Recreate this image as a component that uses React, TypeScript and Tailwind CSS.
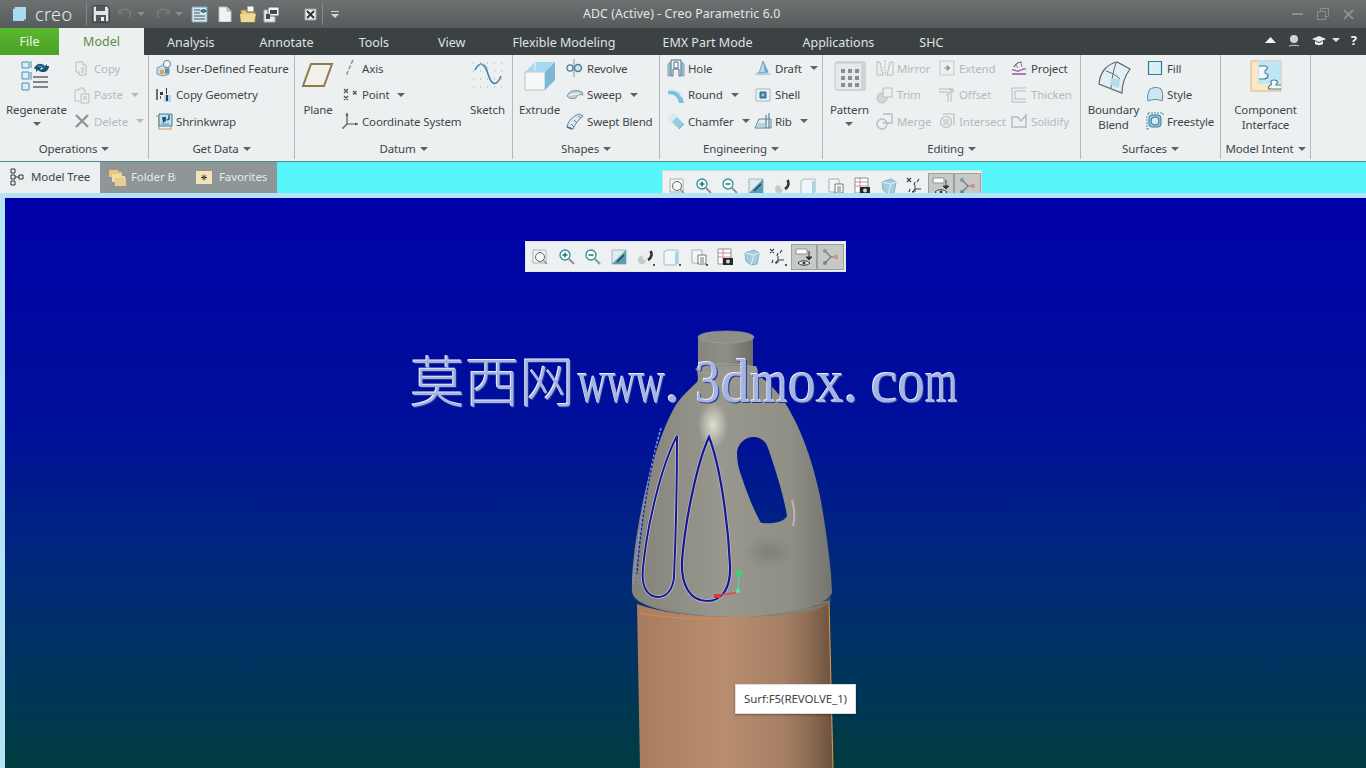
import type { ReactNode } from "react";

const FONT = "font-['Noto_Sans','Open_Sans',sans-serif]";

function Svg({ size = 18, h, children }: { size?: number; h?: number; children: ReactNode }) {
  return (
    <svg width={size} height={h ?? size} viewBox={`0 0 ${size} ${h ?? size}`} fill="none" className="block shrink-0">
      {children}
    </svg>
  );
}

function Caret({ color = "#5a6264" }: { color?: string }) {
  return (
    <svg width="8" height="4" viewBox="0 0 8 4" className="shrink-0">
      <path d="M0 0h8L4 4z" fill={color} />
    </svg>
  );
}

/* ---- ribbon icons ---- */
const icons: Record<string, ReactNode> = {
  copy: (
    <Svg>
      <path d="M3 3h7v3h3v10H6v-3H3z" fill="#eef0f0" stroke="#b5bcbe" />
      <path d="M8 9h3M8 11h3M8 13h3" stroke="#b5bcbe" />
    </Svg>
  ),
  paste: (
    <Svg>
      <path d="M2 4h4l1-2h3l1 2h1v3" stroke="#b5bcbe" />
      <path d="M2 4v11h5" stroke="#b5bcbe" />
      <path d="M8 8h8v9H8z" fill="#eef0f0" stroke="#b5bcbe" />
      <path d="M10 11h4M10 13h4" stroke="#b5bcbe" />
    </Svg>
  ),
  del: (
    <Svg>
      <path d="M3 3l12 12M15 3L3 15" stroke="#8e9698" strokeWidth="2.4" />
    </Svg>
  ),
  udf: (
    <Svg>
      <path d="M2 9l6-3 6 3v6l-6 2-6-2z" fill="#c9dbe6" stroke="#7f97a6" />
      <circle cx="12" cy="5" r="3.6" fill="#f4f6f6" stroke="#4f86a8" />
      <path d="M5 11h4v4H5z" fill="#d6a85a" />
      <path d="M10 9l4 1v4l-4 1z" fill="#6c8ea3" />
    </Svg>
  ),
  copygeo: (
    <Svg>
      <path d="M2 3v11" stroke="#333a3d" strokeWidth="1.4" />
      <path d="M5 6h3v3H5z" fill="#333a3d" />
      <path d="M5 10h1v3H5z" fill="#5a6264" />
      <path d="M11 2h1v6h-1z" fill="#333a3d" />
      <path d="M9 9h7v7H9z" fill="#a6d8ef" />
      <path d="M11 9h2v6h-2z" fill="#333a3d" />
    </Svg>
  ),
  shrink: (
    <Svg>
      <path d="M1 4h3v13h12v-2" stroke="#c9a24f" strokeWidth="1.2" />
      <path d="M4 2h13v12H4z" fill="#bfe0f0" stroke="#3f7896" />
      <path d="M7 5h4v4l-3 2z" fill="#22566f" />
      <path d="M14 3v4l-2 1" stroke="#22566f" strokeWidth="1.4" />
      <path d="M6 12h8" stroke="#4f8fb0" />
    </Svg>
  ),
  axis: (
    <Svg>
      <path d="M12 1L5 17" stroke="#7b8284" strokeWidth="1.2" strokeDasharray="4 2" />
      <path d="M11 2L6 14" stroke="#b79a63" strokeWidth="0.8" strokeDasharray="2 4" />
    </Svg>
  ),
  point: (
    <Svg>
      <path d="M3 3l4 4M7 3L3 7M12 5l3.500 3.500M15.500 5L12 8.500M3 10l4 4M7 10l-4 4" stroke="#4f575a" strokeWidth="1.3" />
    </Svg>
  ),
  csys: (
    <Svg>
      <path d="M6 1v11M6 12h11M6 12l-4 4" stroke="#4f575a" strokeWidth="1.2" />
      <path d="M6 1L4.500 4h3zM17 12l-3-1.500v3z" fill="#4f575a" />
      <circle cx="2" cy="16" r="1" fill="#a8763a" />
    </Svg>
  ),
  revolve: (
    <Svg>
      <path d="M8 0v18" stroke="#8b9599" />
      <ellipse cx="4" cy="9" rx="3" ry="3.200" stroke="#4c7f9a" strokeWidth="1.300" />
      <ellipse cx="12" cy="9" rx="3.500" ry="3.500" stroke="#4c7f9a" strokeWidth="1.500" fill="#cfe3ec" />
    </Svg>
  ),
  sweep: (
    <Svg>
      <path d="M1 10c2-5 8-7 15-4l1 3c-4-1-6 0-7 3-3 1-7 1-9-2z" fill="#b9cfd9" stroke="#7b949f" />
      <path d="M3 10c3-2 6-3 10-2" stroke="#eef5f8" strokeWidth="1.500" />
    </Svg>
  ),
  swept: (
    <Svg>
      <path d="M1 15c1-6 6-11 12-13l4 2c-4 3-8 8-10 13z" fill="#dbe8ee" stroke="#5f8499" />
      <path d="M5 12l3 3M8 8l3 3M12 4l3 2" stroke="#5f8499" />
      <path d="M1 15l5 2" stroke="#4a6d80" strokeWidth="1.500" />
    </Svg>
  ),
  hole: (
    <Svg>
      <path d="M3 3l-2 2v12h2zM15 3l2 2v12h-2z" fill="#a7cfe2" stroke="#7fa6b9" />
      <path d="M4 1h10v16h-2v-7H6v7H4z" fill="#edf4f7" stroke="#4d6f80" />
      <path d="M7 3h4v6H7z" fill="#fff" stroke="#4d6f80" />
    </Svg>
  ),
  round: (
    <Svg>
      <path d="M1 4c8-2 14 1 16 13h-5C11 11 7 8 1 8z" fill="#7fc0dd" />
      <path d="M1 4c7-1 12 1 14 7" stroke="#d6ebf4" strokeWidth="2" />
    </Svg>
  ),
  chamfer: (
    <Svg>
      <path d="M1 6l5-5 11 11-5 5z" fill="#93cbe3" />
      <path d="M1 6l5-5 4 4-5 5z" fill="#d7ecf5" />
      <path d="M12 17l5-5" stroke="#6ea9c2" />
    </Svg>
  ),
  draft: (
    <Svg>
      <path d="M1 16h16l-3-3H3z" fill="#a6d5ea" />
      <path d="M5 14L9 2l5 11z" fill="#bcd9e6" stroke="#7fa6b9" />
      <path d="M9 2l5 11h-3z" fill="#6aa9c6" />
    </Svg>
  ),
  shell: (
    <Svg>
      <path d="M2 3h14v12H2z" fill="#e8f2f6" stroke="#9dbccb" />
      <path d="M6 6h6v6H6z" fill="#4b8fb2" stroke="#2d6a88" />
      <path d="M8 8h2v2H8z" fill="#9fd0e6" />
    </Svg>
  ),
  rib: (
    <Svg>
      <path d="M1 16l4-9h12v9z" fill="#e4eff4" stroke="#5f8499" />
      <path d="M15 1v15M12 3v13" stroke="#5f8499" strokeWidth="1.200" />
      <path d="M4 12h8M3 14h9" stroke="#86b6cd" />
    </Svg>
  ),
  mirror: (
    <Svg>
      <path d="M1 3h3c1 5 2 9 3 13H1zM17 3h-3c-1 5-2 9-3 13h6z" stroke="#b5bcbe" />
      <path d="M9 1v16" stroke="#b5bcbe" strokeDasharray="2 1" />
    </Svg>
  ),
  trim: (
    <Svg>
      <circle cx="6" cy="12" r="5" fill="#d3d8d9" stroke="#b5bcbe" />
      <path d="M7 2h9v9H7z" fill="#eef0f0" stroke="#b5bcbe" />
    </Svg>
  ),
  merge: (
    <Svg>
      <circle cx="6" cy="12" r="5" stroke="#b5bcbe" strokeWidth="1.300" />
      <path d="M7 2h9v9H7" stroke="#b5bcbe" strokeWidth="1.300" />
    </Svg>
  ),
  extend: (
    <Svg>
      <path d="M2 2h14v14H2z" stroke="#c2c8ca" />
      <path d="M6 9h5M9 6.500L12 9l-3 2.500z" fill="#8e9698" stroke="#8e9698" />
    </Svg>
  ),
  offset: (
    <Svg>
      <path d="M1 3h12v13M1 6h9v10" stroke="#b5bcbe" />
      <path d="M8 10l7-7M11 3h4v4" stroke="#b5bcbe" />
    </Svg>
  ),
  intersect: (
    <Svg>
      <path d="M5 2h11v11" stroke="#b5bcbe" strokeWidth="1.200" />
      <circle cx="8" cy="10" r="5.500" stroke="#b5bcbe" strokeWidth="1.200" />
      <path d="M5 7h6v6H5z" fill="#d3d8d9" />
    </Svg>
  ),
  project: (
    <Svg>
      <path d="M2 15h14" stroke="#8a5a94" strokeWidth="1.500" />
      <path d="M2 11c3-1 4 2 7 1s4-3 7-2" stroke="#8a5a94" strokeWidth="1.300" />
      <path d="M4 8c2-4 5-5 8-5" stroke="#5c6467" strokeWidth="1.200" />
      <path d="M6 6l2 3M11 4l1 4" stroke="#b0659c" />
    </Svg>
  ),
  thicken: (
    <Svg>
      <path d="M2 2h14M2 2v14h14M5 5h11M5 5v8h11" stroke="#b5bcbe" />
    </Svg>
  ),
  solidify: (
    <Svg>
      <path d="M2 5h6l3 4 5-6v12H2z" stroke="#b5bcbe" strokeWidth="1.500" />
    </Svg>
  ),
  fill: (
    <Svg>
      <path d="M2.500 2.500h13v13h-13z" fill="#d9eef7" stroke="#2f7c9f" strokeWidth="1.200" />
    </Svg>
  ),
  style: (
    <Svg>
      <path d="M2 15c-1-5 0-9 2-12 4-2 8-2 11 0 2 3 2 8 1 12-4-2-9-2-14 0z" fill="#cfe6f1" stroke="#4e8aa8" />
    </Svg>
  ),
  freestyle: (
    <Svg>
      <path d="M2 1h15M2 1v3M17 1v3M1 17h3M1 4v13" stroke="#5f8499" strokeDasharray="2 1" />
      <rect x="3" y="3" width="12" height="12" rx="3" fill="#8dc6e0" stroke="#3c7b9a" />
      <circle cx="9" cy="9" r="4" fill="#d6ecf6" stroke="#3c7b9a" />
    </Svg>
  ),
};

function RegenIcon() {
  return (
    <Svg size={36} h={32}>
      <path d="M3 2h7v6H3z" fill="#d9eef7" stroke="#4b8fb2" />
      <path d="M3 12h7v7H3z" fill="#d9eef7" stroke="#4b8fb2" />
      <path d="M3 23h7v7H3z" fill="#d9eef7" stroke="#4b8fb2" />
      <path d="M12 1v7M12 12v8" stroke="#4b8fb2" />
      <path d="M14 17h15M14 22h15M14 27h15" stroke="#7f878a" strokeWidth="1.800" />
      <path d="M15 9c1-5 7-7 11-3l2-2v6h-6l2-2c-2-2-6-2-7 1z" fill="#1f5f7f" />
      <path d="M30 6c0 6-7 8-11 4l-2 2V7h6l-2 2c2 2 6 1 7-3z" fill="#17506d" />
    </Svg>
  );
}

function PlaneIcon() {
  return (
    <Svg size={32} h={30}>
      <path d="M9 4h21l-8 22H1z" fill="#f1f0ea" stroke="#8f7a4e" strokeWidth="2" />
    </Svg>
  );
}

function SketchIcon() {
  return (
    <Svg size={32} h={32}>
      <path d="M1 3h30M1 11h30M1 19h30M1 27h30" stroke="#9aa2a5" strokeDasharray="1 6" />
      <path d="M3 10c5-10 10-6 13 4s8 14 13 2" stroke="#3f7f9f" strokeWidth="1.500" />
      <path d="M5 8c4-6 8-5 11 1" stroke="#8bc0d8" strokeWidth="1" />
    </Svg>
  );
}

function ExtrudeIcon() {
  return (
    <Svg size={34} h={32}>
      <path d="M2 12h20v18H2z" fill="#f7f9f9" stroke="#b9c4c8" />
      <path d="M2 12L12 2h20L22 12z" fill="#a6d8ef" />
      <path d="M22 12L32 2v18L22 30z" fill="#7bb8d6" />
      <path d="M12 2v9" stroke="#eaf5fa" />
    </Svg>
  );
}

function PatternIcon() {
  return (
    <Svg size={34} h={34}>
      <path d="M3 1h28l2 2v28H5l-2-2z" fill="#d0d4d5" />
      <path d="M2 3h27v27H2z" fill="#e6e8e9" stroke="#c7cbcc" />
      {[8, 15, 22].map((x) =>
        [9, 16, 23].map((y) => <rect key={`${x}-${y}`} x={x} y={y} width="4" height="4" fill="#888f91" />),
      )}
    </Svg>
  );
}

function BoundaryIcon() {
  return (
    <Svg size={34} h={34}>
      <path d="M2 24C3 12 10 4 20 2l13 7c-5 7-8 15-8 24z" fill="#e3eff4" stroke="#5c6a70" strokeWidth="1.200" />
      <path d="M9 11c6 2 10 4 14 8M19 3c-3 8-4 16-5 25" stroke="#5c6a70" />
      <path d="M14 18l9 1-1 9-9-3z" fill="#b6dcec" />
    </Svg>
  );
}

function InterfaceIcon() {
  return (
    <Svg size={32} h={32}>
      <path d="M1 1h30v30H1z" fill="#fbe7c4" stroke="#d6b781" />
      <path d="M8 1h23v23H8z" fill="#bfe6f5" />
      <path d="M9 6h6c3 0 3 3 1 4s-1 4 1 4 1 5-3 5H9" stroke="#4d7d94" strokeWidth="1.200" fill="#f2f8fa" />
      <path d="M31 29H20c-3 0-1-4 1-4s-3-5 3-5 2 5 2 5h5" stroke="#4d7d94" strokeWidth="1.200" fill="#f2f8fa" />
    </Svg>
  );
}

/* ---- view toolbar icons ---- */
const viewIcons: ReactNode[] = [
  <Svg key="a">
    <path d="M2 2h13v13H2z" stroke="#aab2b4" fill="#f5f7f7" />
    <circle cx="9" cy="9" r="4.500" stroke="#5d6669" />
    <path d="M12 12l4 4" stroke="#8d9496" strokeWidth="1.500" />
  </Svg>,
  <Svg key="b">
    <circle cx="7" cy="7" r="5" fill="#fff" stroke="#2f8f95" strokeWidth="1.300" />
    <path d="M4.500 7h5M7 4.500v5" stroke="#1f6f7a" strokeWidth="1.500" />
    <path d="M11 11l5 5" stroke="#8d9496" strokeWidth="2" />
  </Svg>,
  <Svg key="c">
    <circle cx="7" cy="7" r="5" fill="#fff" stroke="#2f8f95" strokeWidth="1.300" />
    <path d="M4.500 7h5" stroke="#1f6f7a" strokeWidth="1.500" />
    <path d="M11 11l5 5" stroke="#8d9496" strokeWidth="2" />
  </Svg>,
  <Svg key="d">
    <path d="M2 2h14v14H2z" fill="#dcecf2" stroke="#aab2b4" />
    <path d="M2 16L16 2v14z" fill="#5e9eb5" />
    <path d="M7 14l7-7" stroke="#233c48" strokeWidth="1.300" />
  </Svg>,
  <Svg key="e">
    <circle cx="5" cy="12" r="4" fill="#c9cbcb" />
    <circle cx="10" cy="8" r="4.500" fill="#eceeee" />
    <path d="M13.500 3c2 3 1 7-2.500 9" stroke="#2c3336" strokeWidth="2.600" />
    <path d="M16 16h2v2h-2z" fill="#4f575a" />
  </Svg>,
  <Svg key="f">
    <path d="M1 4l3-2h11v13l-3 2H1z" fill="#eef7fb" stroke="#aab9bf" />
    <path d="M12 4h3v11l-3 2z" fill="#a6d5ea" />
    <path d="M16 16h2v2h-2z" fill="#4f575a" />
  </Svg>,
  <Svg key="g">
    <path d="M2 2h10v13H2z" fill="#f3f6f7" stroke="#aab2b4" />
    <path d="M8 7h8v9H8z" fill="#fff" stroke="#6f787b" />
    <path d="M10 10h4M10 12h4M10 14h4" stroke="#6f787b" />
    <path d="M16 16h2v2h-2z" fill="#4f575a" />
  </Svg>,
  <Svg key="h">
    <path d="M2 1h13v15H2z" fill="#fff" stroke="#8b9396" />
    <path d="M2 5h13M2 9h13M7 1v15" stroke="#b06565" strokeWidth="0.700" />
    <path d="M7 10h10v7H7z" fill="#24292b" />
    <circle cx="12" cy="13.500" r="2" fill="#d3d7d8" />
  </Svg>,
  <Svg key="i">
    <path d="M3 5l9-3 5 3-2 11-6 1-5-4z" fill="#a4cddd" stroke="#87adbd" />
    <path d="M3 5l9 2 5-2M12 7l-3 10" stroke="#e3f2f7" />
  </Svg>,
  <Svg key="j">
    <path d="M1 1l4 4M5 1L1 5M9 5l-1 3M13 2l-2 3M3 15l1-3M7 16l1-3" stroke="#3d4548" strokeWidth="1.200" />
    <path d="M9 8v7M9 12h6M9 12l-3 3" stroke="#3d4548" />
    <path d="M16 16h2v2h-2z" fill="#4f575a" />
  </Svg>,
  <Svg key="k">
    <path d="M1 1h11v5H1z" fill="#fff" stroke="#8b9396" />
    <path d="M14 3v6M11 9l3 3 3-3z" fill="#33393c" stroke="#33393c" />
    <path d="M3 15c3-3 9-3 12 0-3 3-9 3-12 0z" fill="#e6e9ea" stroke="#33393c" />
    <circle cx="9" cy="15" r="1.500" fill="#33393c" />
  </Svg>,
  <Svg key="l">
    <path d="M4 3l6 6M4 15l6-6h6" stroke="#6f787b" strokeWidth="1.200" />
    <circle cx="4" cy="3" r="2" fill="#7f9aa8" />
    <circle cx="4" cy="15" r="2" fill="#5c8ca3" />
    <circle cx="15" cy="9" r="2.200" fill="#c99a7e" />
  </Svg>,
];

function ViewToolbar({ className }: { className: string }) {
  return (
    <div className={`flex items-start bg-[#edf1f1] pl-[1px] pt-[2px] ${className}`}>
      {viewIcons.map((icon, i) => (
        <div
          key={i}
          className={`flex h-[26px] w-[26.400px] items-center justify-center ${
            i >= 10 ? "border border-[#9aa09c] bg-[#c6c9c6]" : ""
          }`}
        >
          {icon}
        </div>
      ))}
    </div>
  );
}

/* ---- ribbon ---- */
function Small({ icon, label, caret, off }: { icon: string; label: string; caret?: boolean; off?: boolean }) {
  return (
    <div className="flex h-[26.500px] items-center">
      <div className="flex w-[21px] shrink-0 items-center">{icons[icon]}</div>
      <span className={`whitespace-nowrap ${off ? "text-[#b4babc]" : "text-[#3e4648]"}`}>{label}</span>
      {caret && (
        <span className="ml-[8px]">
          <Caret color={off ? "#b4babc" : "#5a6264"} />
        </span>
      )}
    </div>
  );
}

function Col({ children, className = "" }: { children: ReactNode; className?: string }) {
  return <div className={`flex flex-col ${className}`}>{children}</div>;
}

function Large({
  icon,
  lines,
  caret,
  className,
}: {
  icon: ReactNode;
  lines: string[];
  caret?: boolean;
  className: string;
}) {
  return (
    <div className={`flex shrink-0 flex-col items-center ${className}`}>
      <div className="flex h-[39px] items-start justify-center pt-[5px]">{icon}</div>
      <div className="mt-[8px] flex flex-col items-center leading-[15px] text-[#3e4648]">
        {lines.map((l) => (
          <span key={l} className="whitespace-nowrap">
            {l}
          </span>
        ))}
        {caret && (
          <span className="mt-[5px]">
            <Caret />
          </span>
        )}
      </div>
    </div>
  );
}

function Group({ title, width, children }: { title: string; width: string; children: ReactNode }) {
  return (
    <div className={`flex h-[104px] shrink-0 flex-col border-r border-[#b3babb] ${width}`}>
      <div className="flex h-[86px] overflow-hidden">{children}</div>
      <div className="flex h-[16px] items-center justify-center gap-[4px] text-[#3e4648]">
        <span>{title}</span>
        <Caret />
      </div>
    </div>
  );
}

function Ribbon() {
  return (
    <div className="flex h-[106px] bg-[#edf0f1] text-[11.500px] tracking-[-0.15px]">
      <Group title="Operations" width="w-[149px]">
        <Large className="w-[73px]" icon={<RegenIcon />} lines={["Regenerate"]} caret />
        <Col>
          <Small icon="copy" label="Copy" off />
          <Small icon="paste" label="Paste" off caret />
          <Small icon="del" label="Delete" off caret />
        </Col>
      </Group>
      <Group title="Get Data" width="w-[146px]">
        <Col className="pl-[6px]">
          <Small icon="udf" label="User-Defined Feature" />
          <Small icon="copygeo" label="Copy Geometry" />
          <Small icon="shrink" label="Shrinkwrap" />
        </Col>
      </Group>
      <Group title="Datum" width="w-[218px]">
        <Large className="w-[46px]" icon={<PlaneIcon />} lines={["Plane"]} />
        <Col className="w-[122px]">
          <Small icon="axis" label="Axis" />
          <Small icon="point" label="Point" caret />
          <Small icon="csys" label="Coordinate System" />
        </Col>
        <Large className="w-[49px]" icon={<SketchIcon />} lines={["Sketch"]} />
      </Group>
      <Group title="Shapes" width="w-[147px]">
        <Large className="w-[53px]" icon={<ExtrudeIcon />} lines={["Extrude"]} />
        <Col>
          <Small icon="revolve" label="Revolve" />
          <Small icon="sweep" label="Sweep" caret />
          <Small icon="swept" label="Swept Blend" />
        </Col>
      </Group>
      <Group title="Engineering" width="w-[163px]">
        <Col className="w-[94px] pl-[7px]">
          <Small icon="hole" label="Hole" />
          <Small icon="round" label="Round" caret />
          <Small icon="chamfer" label="Chamfer" caret />
        </Col>
        <Col>
          <Small icon="draft" label="Draft" caret />
          <Small icon="shell" label="Shell" />
          <Small icon="rib" label="Rib" caret />
        </Col>
      </Group>
      <Group title="Editing" width="w-[258px]">
        <Large className="w-[53px]" icon={<PatternIcon />} lines={["Pattern"]} caret />
        <Col className="w-[62px]">
          <Small icon="mirror" label="Mirror" off />
          <Small icon="trim" label="Trim" off />
          <Small icon="merge" label="Merge" off />
        </Col>
        <Col className="w-[72px]">
          <Small icon="extend" label="Extend" off />
          <Small icon="offset" label="Offset" off />
          <Small icon="intersect" label="Intersect" off />
        </Col>
        <Col>
          <Small icon="project" label="Project" />
          <Small icon="thicken" label="Thicken" off />
          <Small icon="solidify" label="Solidify" off />
        </Col>
      </Group>
      <Group title="Surfaces" width="w-[140px]">
        <Large className="w-[65px]" icon={<BoundaryIcon />} lines={["Boundary", "Blend"]} />
        <Col>
          <Small icon="fill" label="Fill" />
          <Small icon="style" label="Style" />
          <Small icon="freestyle" label="Freestyle" />
        </Col>
      </Group>
      <Group title="Model Intent" width="w-[90px]">
        <Large className="w-[89px]" icon={<InterfaceIcon />} lines={["Component", "Interface"]} />
      </Group>
    </div>
  );
}

function TitleBar() {
  return (
    <div className="relative flex h-[28px] items-center bg-gradient-to-b from-[#6c7272] to-[#565c5c] pl-[13px]">
      <svg width="13" height="14" viewBox="0 0 13 14" className="shrink-0">
        <path d="M2 0h11v12l-2 2H0V2z" fill="#a9dcf0" />
        <path d="M0 2h2V0zM11 14v-2h2z" fill="#5c8ea3" />
      </svg>
      <span className="ml-[9px] w-[46px] text-[18px] font-light leading-none tracking-[0.4px] text-[#e6e9e9]">creo</span>
      <div className="ml-[5px] mr-[5px] h-[22px] w-px bg-[#858b8b]" />
      <div className="flex items-center">
        <Svg size={18}>
          <path d="M1 1h14l2 2v14H1z" fill="#dfe4e6" stroke="#23292b" />
          <path d="M4 1h9v5H4zM4 10h10v7H4z" fill="#50575a" />
          <path d="M9 12h3v4H9z" fill="#eef0f0" />
        </Svg>
        <span className="ml-[7px] flex items-center gap-[4px] opacity-40">
          <Svg size={16}>
            <path d="M2 6c3-4 8-4 11 0 1 2 0 4-1 6" stroke="#8a9090" strokeWidth="2" />
            <path d="M1 2v6h6z" fill="#8a9090" />
          </Svg>
          <Caret color="#c3c7c7" />
        </span>
        <span className="ml-[10px] flex items-center gap-[4px] opacity-40">
          <Svg size={16}>
            <path d="M14 6c-3-4-8-4-11 0-1 2 0 4 1 6" stroke="#8a9090" strokeWidth="2" />
            <path d="M15 2v6H9z" fill="#8a9090" />
          </Svg>
          <Caret color="#c3c7c7" />
        </span>
        <span className="ml-[8px]">
          <Svg size={17}>
            <path d="M1 1h15v15H1z" fill="#d8e7ec" stroke="#7fa4b3" />
            <path d="M3 4h6M3 7h6M3 10h11M3 13h11" stroke="#37505c" />
            <path d="M10 6c1-3 4-3 5 0M15 4c-1 3-4 3-5 0" stroke="#1f5f7f" strokeWidth="1.500" />
          </Svg>
        </span>
        <span className="ml-[9px]">
          <Svg size={16}>
            <path d="M2 1h8l4 4v11H2z" fill="#f1f3f3" stroke="#b9bfc0" />
            <path d="M10 1v4h4" fill="#c9ced0" stroke="#9ea5a7" />
          </Svg>
        </span>
        <span className="ml-[6px]">
          <Svg size={18}>
            <path d="M2 5h5l1 2h8v10H2z" fill="#e7c77c" stroke="#a08548" />
            <path d="M8 1h7v6H8z" fill="#fafafa" stroke="#676d6e" />
            <path d="M1 9h16l-2 8H2z" fill="#f0d993" />
          </Svg>
        </span>
        <span className="ml-[6px]">
          <Svg size={17}>
            <path d="M1 4h11v12H1z" fill="#e7ecee" stroke="#a9afb1" />
            <path d="M5 1h11v9H5z" fill="#f5f7f7" stroke="#5d6467" />
            <path d="M7 4h7v4H7zM3 8h4v5H3z" fill="#3e4a4f" />
          </Svg>
        </span>
        <span className="ml-[24px]">
          <Svg size={13}>
            <path d="M1 1h11v11H1z" fill="#e8ebeb" stroke="#9aa0a1" />
            <path d="M3 3l7 7M10 3l-7 7" stroke="#2a3032" strokeWidth="1.800" />
          </Svg>
        </span>
        <div className="ml-[5px] h-[22px] w-px bg-[#858b8b]" />
        <span className="ml-[8px] flex flex-col items-center gap-[2px]">
          <span className="h-px w-[8px] bg-[#d3d6d6]" />
          <Caret color="#d3d6d6" />
        </span>
      </div>
      <span className="absolute left-[583px] text-[12.300px] tracking-[0.1px] text-[#e3e6e6]">ADC (Active) - Creo Parametric 6.0</span>
      <div className="ml-auto flex items-center gap-[14px] pr-[12px] text-[#8a9090]">
        <span className="h-[2px] w-[11px] bg-[#8a9090]" />
        <Svg size={12}>
          <path d="M0.500 3.500h8v8h-8zM3.500 3V0.500h8v8H9" stroke="#8a9090" />
        </Svg>
        <Svg size={11}>
          <path d="M1 1l9 9M10 1l-9 9" stroke="#8a9090" strokeWidth="1.800" />
        </Svg>
      </div>
    </div>
  );
}

function TabBar() {
  const tabs = [
    ["Analysis", "ml-[23px]"],
    ["Annotate", "ml-[45px]"],
    ["Tools", "ml-[45px]"],
    ["View", "ml-[49px]"],
    ["Flexible Modeling", "ml-[47px]"],
    ["EMX Part Mode", "ml-[47px]"],
    ["Applications", "ml-[50px]"],
    ["SHC", "ml-[45px]"],
  ];
  return (
    <div className="flex h-[27px] bg-[#3c4244] text-[12.500px] text-[#dfe3e3]">
      <div className="flex w-[59px] items-center justify-center bg-gradient-to-b from-[#5cb82f] to-[#4aa028] pt-[2px] text-[#eef7e8]">File</div>
      <div className="flex w-[85px] items-center justify-center bg-[#edf0f1] pt-[2px] text-[#5e8a3c]">Model</div>
      {tabs.map(([t, m]) => (
        <div key={t} className={`flex items-center whitespace-nowrap pt-[3px] ${m}`}>
          {t}
        </div>
      ))}
      <div className="ml-auto flex items-center gap-[11px] pb-[3px] pr-[9px]">
        <svg width="11" height="6" viewBox="0 0 11 6">
          <path d="M0 6l5.500-6L11 6z" fill="#f2f4f4" />
        </svg>
        <Svg size={14}>
          <circle cx="7" cy="6" r="4" fill="#cfd3d3" />
          <path d="M2 13c3-1 7-1 10 0" stroke="#cfd3d3" />
        </Svg>
        <span className="flex items-center gap-[6px]">
          <Svg size={14}>
            <path d="M0 6l7-3 7 3-7 3z" fill="#e8ebeb" />
            <path d="M3 8v3c2 1.500 6 1.500 8 0V8L7 10z" fill="#e8ebeb" />
          </Svg>
          <Caret color="#e8ebeb" />
        </span>
        <span className="text-[13px] font-bold leading-none text-[#f2f4f4]">?</span>
      </div>
    </div>
  );
}

function Dock() {
  return (
    <div className="flex h-[37px] flex-col bg-[#b5e3f6]">
      <div className="flex h-[32px] overflow-hidden border-t border-[#4d8a8c] bg-[#58f4fb] text-[11.500px] tracking-[-0.1px]">
        <div className="flex w-[100px] items-center bg-[#eceff0] pb-[1px] pl-[10px] text-[#3e4648]">
          <Svg size={14} h={18}>
            <path d="M1 1h4v4H1zM1 7h4v4H1zM1 13h4v4H1zM9 7h4v4H9zM5 9h4" stroke="#2f3638" />
          </Svg>
          <span className="ml-[7px] whitespace-nowrap">Model Tree</span>
        </div>
        <div className="flex w-[177px] items-center bg-[#8e9697] pb-[1px] pl-[8px] text-[#e8ebeb]">
          <Svg size={19}>
            <path d="M1 2h9l1 2h3v5H1z" fill="#e7c77c" />
            <path d="M4 6h9l1 2h3v6H4z" fill="#f1dca4" />
            <path d="M7 10h11v8H7z" fill="#e9cf8f" />
          </Svg>
          <span className="ml-[4px] w-[45px] overflow-hidden whitespace-nowrap">Folder Browser</span>
          <span className="ml-[20px]">
            <Svg size={16}>
              <path d="M0 2h16v13H0z" fill="#f4e5b6" />
              <path d="M5 8.500h6M8 5.500v6M6 6.500l4 4M10 6.500l-4 4" stroke="#3e4648" />
            </Svg>
          </span>
          <span className="ml-[7px]">Favorites</span>
        </div>
        <ViewToolbar className="ml-[385px] mt-[8px] h-[32px] w-[320px] border border-[#d6dcdc]" />
      </div>
    </div>
  );
}

/* glyph box and squeeze for the wide latin part of the watermark */
const wm: [string, string][] = [
  ["w", "w-[29px] scale-x-[0.66]"],
  ["w", "w-[29px] scale-x-[0.66]"],
  ["w", "w-[29px] scale-x-[0.66]"],
  [".", "w-[15px]"],
  ["\u00a0", "w-[15px]"],
  ["3", "w-[26px] scale-x-[0.8]"],
  ["d", "w-[29px] scale-x-[0.93]"],
  ["m", "w-[38px] scale-x-[0.78]"],
  ["o", "w-[28px] scale-x-[0.9]"],
  ["x", "w-[28px] scale-x-[0.9]"],
  [".", "w-[14px]"],
  ["\u00a0", "w-[13px]"],
  ["c", "w-[27px]"],
  ["o", "w-[27px] scale-x-[0.88]"],
  ["m", "w-[33px] scale-x-[0.68]"],
];

function Watermark() {
  return (
    <div className="absolute left-[405px] top-[145px] flex items-baseline whitespace-nowrap text-[#a3b3e4] [text-shadow:-1px_-1px_0_#eceef6,1px_1px_0_#26348c]">
      <span className="w-[168px] font-['Noto_Sans_CJK_SC',sans-serif] text-[55px] font-light leading-[70px]">莫西网</span>
      {wm.map(([ch, cls], i) => (
        <span key={i} className={`flex justify-center font-['Liberation_Serif',serif] text-[62px] leading-[70px] ${cls}`}>
          {ch}
        </span>
      ))}
    </div>
  );
}

/* the part in page coordinates, shifted by the viewport's offset */
function Bottle() {
  return (
    <svg width="260" height="448" viewBox="600 320 260 448" fill="none" className="absolute left-[595px] top-[122px]">
      <defs>
        <linearGradient id="body" x1="0" x2="1" y1="0" y2="0">
          <stop offset="0" stopColor="#83837c" />
          <stop offset="0.45" stopColor="#98988e" />
          <stop offset="0.8" stopColor="#8f8f86" />
          <stop offset="1" stopColor="#75756f" />
        </linearGradient>
        <linearGradient id="can" x1="0" x2="1" y1="0" y2="0">
          <stop offset="0" stopColor="#a97c60" />
          <stop offset="0.45" stopColor="#b98d6f" />
          <stop offset="0.75" stopColor="#a67f64" />
          <stop offset="0.88" stopColor="#8d6c54" />
          <stop offset="1" stopColor="#6a503c" />
        </linearGradient>
        <linearGradient id="neck" x1="0" x2="1" y1="0" y2="0">
          <stop offset="0" stopColor="#85857e" />
          <stop offset="0.5" stopColor="#8f8f87" />
          <stop offset="1" stopColor="#6e6e68" />
        </linearGradient>
        <radialGradient id="shine" cx="0.5" cy="0.5" r="0.5">
          <stop offset="0" stopColor="#ececdf" stopOpacity="0.85" />
          <stop offset="1" stopColor="#ececdf" stopOpacity="0" />
        </radialGradient>
        <radialGradient id="handle" cx="0.5" cy="0.5" r="0.5">
          <stop offset="0" stopColor="#6a6a64" stopOpacity="0.45" />
          <stop offset="1" stopColor="#6a6a64" stopOpacity="0" />
        </radialGradient>
        <linearGradient id="foot" x1="0" x2="0" y1="0" y2="1">
          <stop offset="0" stopColor="#8f8f86" stopOpacity="0" />
          <stop offset="1" stopColor="#7e7e78" />
        </linearGradient>
      </defs>
      <path d="M637 604c50 18 140 16 192-2l4 166H640z" fill="url(#can)" />
      <path d="M829 602l4 166" stroke="#e79a4a" strokeWidth="1" />
      <path d="M640 613c50 10 130 6 189-12" stroke="#d98a4a" strokeWidth="1" />
      <path d="M698 338v30h55v-30z" fill="url(#neck)" />
      <ellipse cx="726" cy="337" rx="28" ry="6" fill="#8f8f87" stroke="#a9a99f" strokeWidth="0.500" />
      <path
        fillRule="evenodd"
        d="M697 366h59c3 6 1 8 3 10 12 8 22 20 28 30 12 20 24 48 33 90 6 32 9 58 11 78l1 19c-6 12-40 24-100 24-60 0-98-12-100-25-1-22 4-60 13-100 6-26 16-60 28-82 6-12 16-20 24-28 2-3 0-8 0-16z
        M737 452c1-9 9-16 18-15 7 1 11 5 13 11 7 20 16 48 19 68-3 6-13 8-26 7-7-12-14-30-20-48-3-8-4-15-4-23z"
        fill="url(#body)"
      />
      <ellipse cx="726" cy="369" rx="30" ry="5" stroke="#a4a498" strokeWidth="1" />
      <ellipse cx="768" cy="552" rx="26" ry="17" fill="url(#handle)" />
      <ellipse cx="713" cy="425" rx="15" ry="24" fill="url(#shine)" />
      <path d="M792 500c3 10 3 18 1 26" stroke="#d5d5c9" strokeWidth="2" opacity="0.6" />
      <path d="M633 592c4 14 60 25 100 25s90-10 98-24v8c-10 12-50 16-98 16s-92-8-100-20z" fill="url(#foot)" />
      <path d="M661 428c-10 34-20 88-28 156" stroke="#7a9ae8" strokeWidth="1.500" strokeDasharray="3 1.500" />
      <path d="M656 448c-9 38-16 84-19 126" stroke="#1a1a90" strokeWidth="1.200" strokeDasharray="3 1.500" />
      <path d="M677 436c-16 30-30 90-34 132-2 18 4 29 15 29 9 0 15-8 16-20 2-46 3-100 3-141z" stroke="#dfe3ff" strokeWidth="3.200" opacity="0.8" />
      <path d="M677 436c-16 30-30 90-34 132-2 18 4 29 15 29 9 0 15-8 16-20 2-46 3-100 3-141z" stroke="#181888" strokeWidth="2" />
      <path d="M709 437c-12 26-24 84-27 124-1 24 8 40 25 40 16 0 24-14 23-36-2-44-10-100-21-128z" stroke="#c6caf5" strokeWidth="3.500" opacity="0.8" />
      <path d="M709 437c-12 26-24 84-27 124-1 24 8 40 25 40 16 0 24-14 23-36-2-44-10-100-21-128z" stroke="#181888" strokeWidth="2.200" />
      <path d="M717 595l19-2" stroke="#d94a4a" strokeWidth="1.500" />
      <path d="M714 594h7v4h-7z" fill="#d63c3c" />
      <path d="M739 575l-1 16" stroke="#4ad88a" strokeWidth="1.500" />
      <circle cx="739.500" cy="573.500" r="3.200" fill="#3ed66a" />
      <circle cx="738" cy="591" r="2" fill="#5fe0c0" />
    </svg>
  );
}

function Tooltip() {
  return (
    <div className="absolute left-[730px] top-[486px] flex h-[30px] w-[121px] items-center justify-center border border-[#d5dfe3] bg-white text-[11.500px] tracking-[-0.1px] text-[#3e4648] shadow-[0_1px_2px_rgba(0,0,0,0.35)]">
      Surf:F5(REVOLVE_1)
    </div>
  );
}

export default function App() {
  return (
    <div className={`flex h-[768px] w-[1366px] flex-col overflow-hidden ${FONT}`}>
      <TitleBar />
      <TabBar />
      <Ribbon />
      <Dock />
      <div className="flex-1 bg-[#b5e3f6] pl-[5px]">
        <div className="relative h-full overflow-hidden bg-[linear-gradient(180deg,#0000a8_0%,#00109a_40%,#00267e_62%,#003362_80%,#003c40_100%)]">
          <ViewToolbar className="absolute left-[520px] top-[43px] h-[31px] w-[321px] border border-[#dfe4e4]" />
          <Bottle />
          <Watermark />
          <Tooltip />
        </div>
      </div>
    </div>
  );
}
